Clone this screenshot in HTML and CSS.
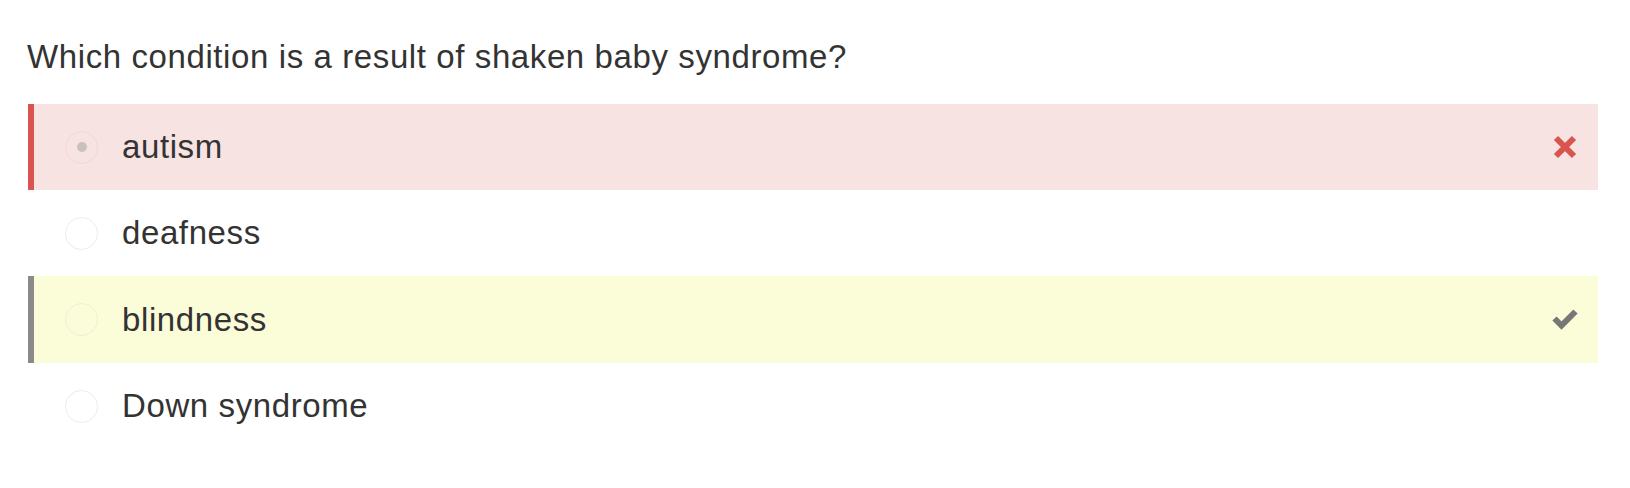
FILE: index.html
```html
<!DOCTYPE html>
<html>
<head>
<meta charset="utf-8">
<link rel="stylesheet" href="styles.css">
</head>
<body>
<div class="quiz">
  <h1 class="question">Which condition is a result of shaken baby syndrome?</h1>
  <ul class="answers">
    <li class="answer wrong">
      <span class="radio checked"></span>
      <span class="label">autism</span>
      <svg class="mark" width="26" height="26" viewBox="0 0 26 26"><path d="M4 4 L22 22 M22 4 L4 22" stroke="#d9534f" stroke-width="6" stroke-linecap="butt" fill="none"/></svg>
    </li>
    <li class="answer">
      <span class="radio"></span>
      <span class="label">deafness</span>
    </li>
    <li class="answer correct">
      <span class="radio"></span>
      <span class="label">blindness</span>
      <svg class="mark check" width="26" height="22" viewBox="0 0 26 22"><path d="M2.5 10.5 L9.5 17.5 L23.5 3.5" stroke="#777" stroke-width="6" stroke-linecap="butt" stroke-linejoin="miter" fill="none"/></svg>
    </li>
    <li class="answer">
      <span class="radio"></span>
      <span class="label">Down syndrome</span>
    </li>
  </ul>
</div>
</body>
</html>
```
FILE: styles.css
```css
html, body {
  margin: 0;
  padding: 0;
  background: #fff;
}
body {
  font-family: "Liberation Sans", Arial, Helvetica, sans-serif;
  color: #333;
}
.quiz {
  padding: 35px 32px 0 28px;
}
.question {
  margin: 0 0 0 -1px;
  font-size: 33px;
  letter-spacing: 0.6px;
  font-weight: normal;
  line-height: 44px;
  color: #333;
  height: 69px;
}
.answers {
  list-style: none;
  margin: 0;
  padding: 0;
}
.answer {
  display: flex;
  align-items: center;
  height: 86px;
  border-left: 6px solid transparent;
  padding-left: 31px;
  padding-right: 20px;
  font-size: 33px;
  letter-spacing: 0.6px;
}
.answer.wrong {
  background: #f8e3e3;
  border-left-color: #d9534f;
}
.answer.correct {
  background: #fbfcd8;
  border-left-color: #8a8a8a;
  height: 87px;
}
.radio {
  width: 31px;
  height: 31px;
  border: 1px solid #ececec;
  border-radius: 50%;
  box-sizing: content-box;
  display: flex;
  align-items: center;
  justify-content: center;
  margin-right: 24px;
  flex: none;
}
.answer.wrong .radio {
  border-color: #eed8d8;
}
.answer.correct .radio {
  border-color: #efefdc;
}
.radio.checked::after {
  content: "";
  width: 10px;
  height: 10px;
  border-radius: 50%;
  background: #c9c0c0;
}
.label {
  flex: 1;
  margin-top: 0;
}
.mark {
  flex: none;
}
.mark.check {
  margin-bottom: 2px;
}
```
